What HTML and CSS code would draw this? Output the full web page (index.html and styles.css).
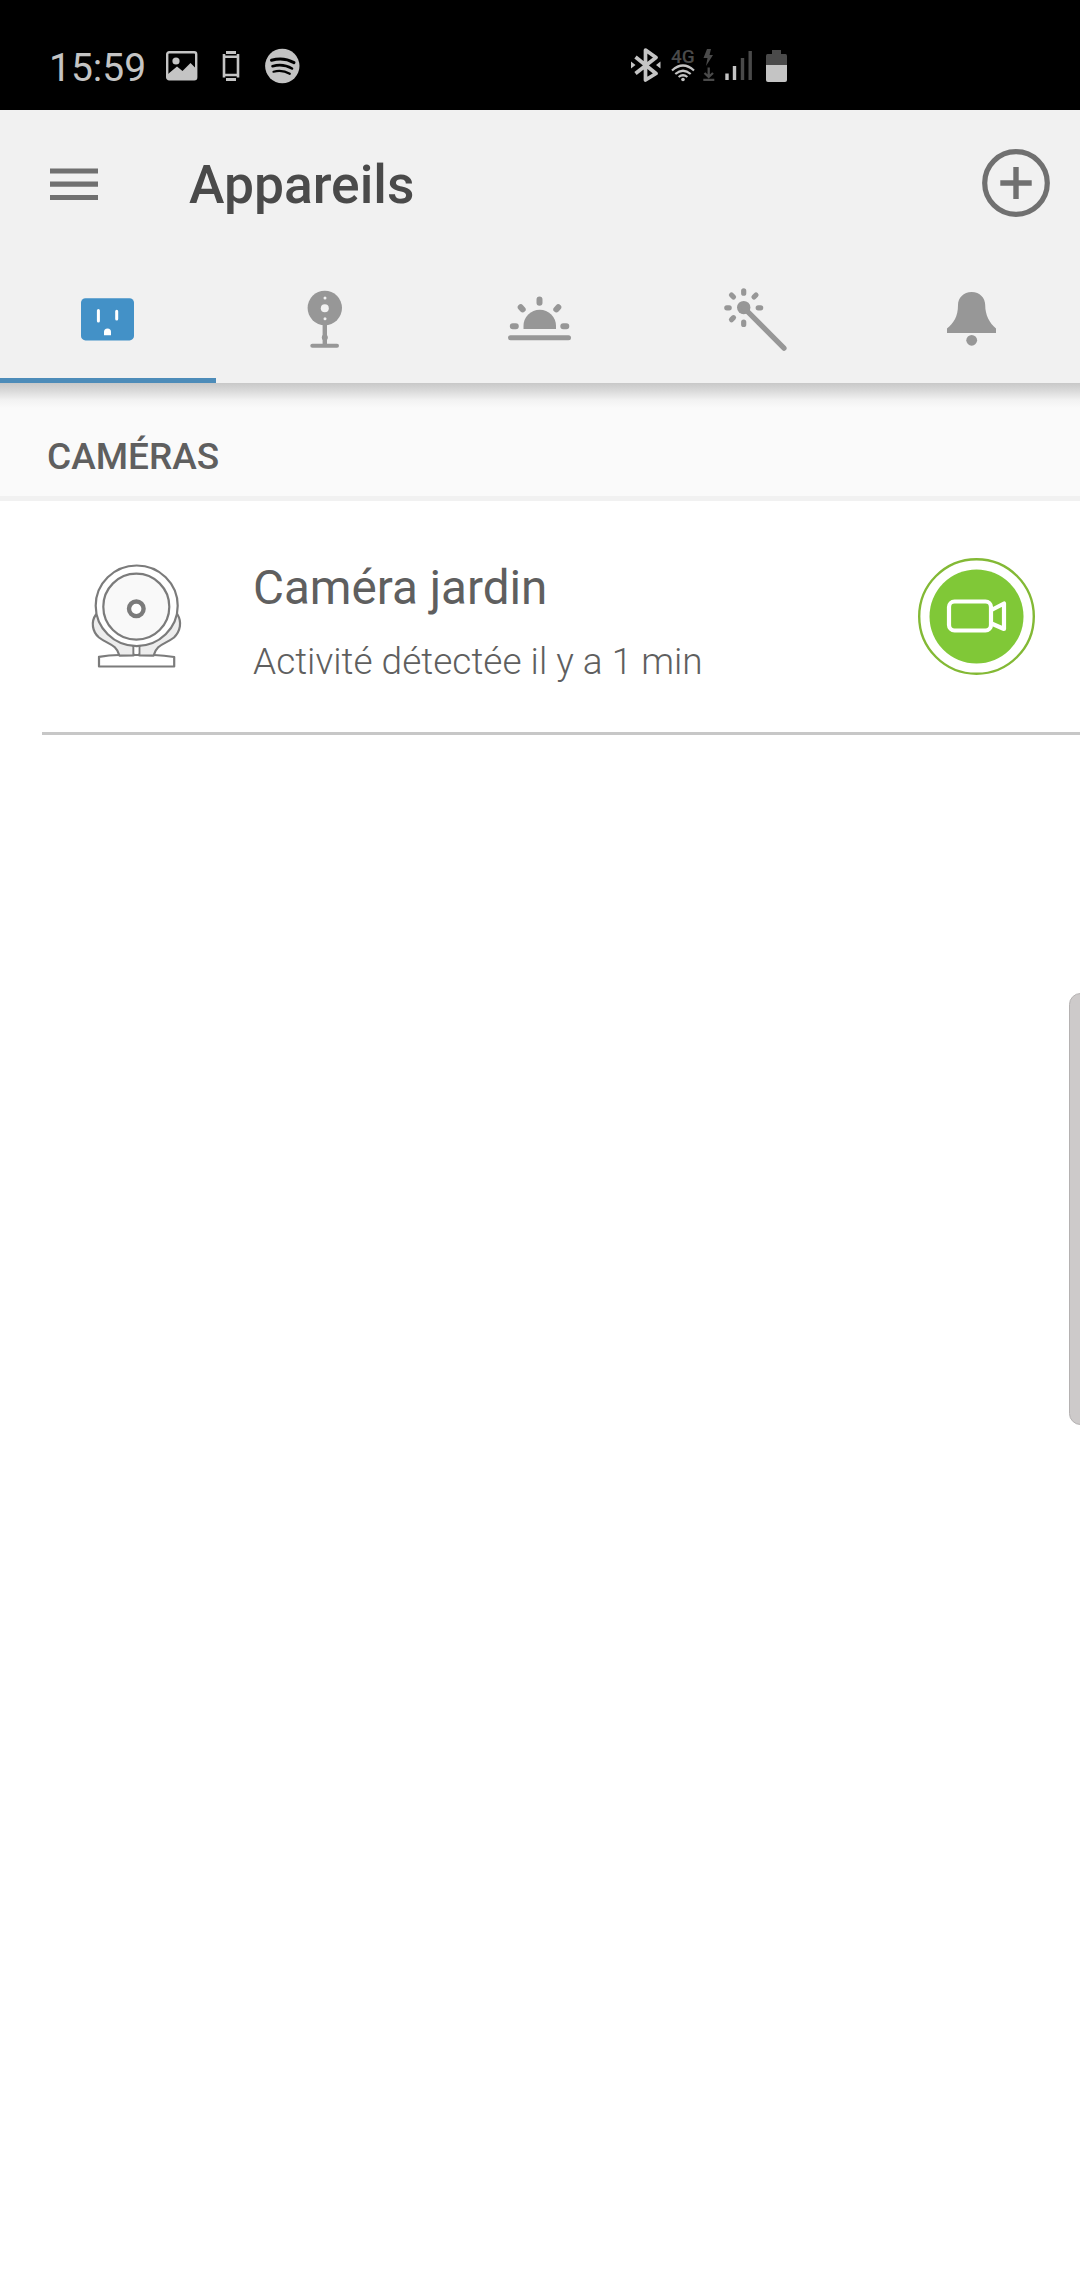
FILE: index.html
```html
<!DOCTYPE html>
<html lang="fr">
<head>
<meta charset="utf-8">
<title>Appareils</title>
<link rel="stylesheet" href="styles.css">
</head>
<body>
<div class="status">
  <div class="status-left">
    <span class="clock">15:59</span>
    <svg class="ic-image" width="32" height="30" viewBox="0 0 32 30"><rect x="1.2" y="1.2" width="29" height="27" rx="2" fill="none" stroke="#c4c4c4" stroke-width="2.4"/><circle cx="10" cy="10" r="3.6" fill="#c4c4c4"/><path d="M2 23L11 15.500L16.500 20L24.500 12L30 17.500V28H2Z" fill="#c4c4c4"/></svg>
    <svg class="ic-phone" width="18" height="30" viewBox="0 0 18 30"><path d="M4 1.500H14M4 28.500H14" stroke="#c4c4c4" stroke-width="3"/><path d="M2 3V26.500M16 3V26.500" stroke="#c4c4c4" stroke-width="2.600"/><path d="M1 5.700H17M1 24H17" stroke="#c4c4c4" stroke-width="2.400"/></svg>
    <svg class="ic-music" width="35" height="36" viewBox="0 0 35 36"><circle cx="17.300" cy="18" r="17.200" fill="#c4c4c4"/><g fill="none" stroke="#000" stroke-linecap="round"><path d="M6.500 12.300C14 10 22.500 11 29 14.600" stroke-width="3"/><path d="M7.500 18.200C14 16.400 21 17 27 20.500" stroke-width="2.600"/><path d="M8.500 23.700C14 22.300 20 23 24.800 25.800" stroke-width="2.200"/></g></svg>
  </div>
  <div class="status-right">
    <svg width="30" height="34" viewBox="631 48 30 34"><path d="M635.500 57L656 73.500L645.500 80V50L656 57.500L635.500 73.500" fill="none" stroke="#c4c4c4" stroke-width="3.700" stroke-linejoin="round"/><path d="M631 61.500L635.500 65L631 68.500ZM660.500 61.500L656 65L660.500 68.500Z" fill="#c4c4c4"/></svg>
    <div class="net">
      <span class="net-label">4G</span>
      <svg width="24" height="18" viewBox="671 64 24 18"><g fill="none" stroke="#c4c4c4" stroke-width="2.200"><path d="M672 70.500Q683 60.500 694 70.500M675.300 74Q683 67.500 690.700 74M678.600 77Q683 73.500 687.400 77"/></g><circle cx="683" cy="79.500" r="1.800" fill="#c4c4c4"/></svg>
    </div>
    <svg class="ic-data" width="12" height="33" viewBox="703 48 12 33"><path d="M707 49H711L709.500 55H713L706 66L707.500 58H703.500Z" fill="#4a4a4a"/><path d="M708.700 67.500V77M704.500 73L708.700 77L713 73M703.300 79.800H714.300" fill="none" stroke="#4a4a4a" stroke-width="2.300"/></svg>
    <svg class="ic-signal" width="28" height="31" viewBox="725 50 28 31"><path d="M727 73.500V80M734.500 66V80" stroke="#c4c4c4" stroke-width="3.400"/><path d="M742.500 58V80M750.200 51V80" stroke="#4a4a4a" stroke-width="3.400"/></svg>
    <svg class="ic-battery" width="21" height="33" viewBox="766 49 21 33"><path d="M772 50H781V54H785.500Q787 54 787 56V65H766V56Q766 54 767.500 54H772Z" fill="#4a4a4a"/><path d="M766 65H787V80Q787 82 785 82H768Q766 82 766 80Z" fill="#c4c4c4"/></svg>
  </div>
</div>

<header class="header">
  <div class="toolbar">
    <svg class="menu" width="48" height="33" viewBox="0 0 48 33"><path d="M0 3H48M0 16.200H48M0 29.500H48" stroke="#707070" stroke-width="5.200"/></svg>
    <h1 class="title">Appareils</h1>
    <svg class="add" width="68" height="68" viewBox="0 0 68 68"><circle cx="34" cy="34" r="31.300" fill="none" stroke="#707070" stroke-width="5.200"/><path d="M34 18V50M18.300 34H49.700" stroke="#707070" stroke-width="5.400"/></svg>
  </div>
  <nav class="tabs">
    <div class="tab active"><svg width="70" height="70" viewBox="73 284 70 70"><rect x="81" y="298.200" width="53" height="42.200" rx="4.500" fill="#4391c7"/><path d="M98.400 310.500V321M116.700 311.300V319" stroke="#fff" stroke-width="3" stroke-linecap="round"/><path d="M104 335.300V332A3.500 3.500 0 0 1 111 332V335.300Z" fill="#fff"/></svg></div>
    <div class="tab"><svg width="70" height="70" viewBox="289 284 70 70"><circle cx="324.800" cy="308" r="17.200" fill="#979797"/><path d="M324.800 320V345" stroke="#979797" stroke-width="4.400"/><circle cx="324.800" cy="337.500" r="3" fill="#979797"/><path d="M312.300 345.700H337" stroke="#979797" stroke-width="4" stroke-linecap="round"/><g fill="#f1f1f1"><circle cx="324.800" cy="308.300" r="4"/><circle cx="325" cy="298" r="1.500"/><circle cx="325" cy="318.800" r="1.500"/></g></svg></div>
    <div class="tab"><svg width="70" height="70" viewBox="505 284 70 70"><path d="M523.500 329V326A16.200 16.200 0 0 1 556 326V329Z" fill="#979797"/><g fill="none" stroke="#979797" stroke-width="6" stroke-linecap="round"><path d="M539.500 299.500V302.700M520.700 307.200L522.700 309.400M558.300 307.200L556.300 309.400M512.800 326.200H515.800M563.300 326.200H566.300"/><path d="M510.500 337.700H568.500" stroke-width="5"/></g></svg></div>
    <div class="tab"><svg width="70" height="70" viewBox="721 284 70 70"><circle cx="743.700" cy="307.600" r="6.700" fill="#979797"/><g fill="none" stroke="#979797" stroke-width="5.200" stroke-linecap="round"><path d="M743.700 307.600L784 348.200"/><path d="M743.700 290.800V293.200M743.700 322V324.500M726.800 307.800H729.200M758.200 307.800H760.700M731.500 295L733.500 297M756 295L754 297M731.500 319.700L733.500 317.700"/></g></svg></div>
    <div class="tab"><svg width="70" height="70" viewBox="937 284 70 70"><path d="M971.700 292C963.500 292 958 298 958 305C958 317 953.500 323 947 328.500V333H996V328.500C989.500 323 985.200 315 985.200 305C985.200 298 979.900 292 971.700 292Z" fill="#979797"/><circle cx="971.700" cy="340.300" r="5.400" fill="#979797"/></svg></div>
  </nav>
</header>

<main>
  <h2 class="section">CAMÉRAS</h2>
  <div class="row">
    <svg class="device" width="94" height="108" viewBox="90 563 94 108"><g stroke="#7b7b7b" stroke-width="2.200" stroke-linejoin="round"><path d="M99 656.800Q109 655.300 119 655H154Q164 655.300 174.200 657V666.500H99Z" fill="#fff"/><path d="M96 614.500C90.500 622 92.500 632 99 637.500C108 644.500 116.500 644 119.500 655.700L133.500 655.500V646.200Z" fill="#ededed"/><path d="M177.500 614.500C182 622 180.500 631 174 637.500C165 644.500 156.500 644 153.500 655.700L139.300 655.500V646.200Z" fill="#ededed"/><path d="M134.500 646V653.500H138.500V646Z" fill="#fff" stroke="none"/><ellipse cx="136.700" cy="605.800" rx="41" ry="40.300" fill="#fff"/><circle cx="136.300" cy="606.700" r="33" fill="#f9f9f9"/><circle cx="136.300" cy="608.800" r="7.300" fill="#fff" stroke-width="4.400"/></g></svg>
    <div class="info">
      <div class="name">Caméra jardin</div>
      <div class="activity">Activité détectée il y a 1 min</div>
    </div>
    <svg class="live" width="118" height="118" viewBox="0 0 118 118"><circle cx="58.500" cy="58.500" r="57.300" fill="#fff" stroke="#83b935" stroke-width="2.400"/><circle cx="58.500" cy="58.500" r="47" fill="#80c837"/><g fill="none" stroke="#fff" stroke-width="4.200" stroke-linejoin="round"><rect x="31" y="43.500" width="42" height="29" rx="5.500"/><path d="M73.500 52L86 45.500V71L73.500 65.500"/></g></svg>
  </div>
</main>
<div class="edge-handle"></div>
</body>
</html>
```
FILE: styles.css
```css
* { box-sizing: border-box; }
body {
  margin: 0;
  width: 1080px;
  height: 2280px;
  position: relative;
  overflow: hidden;
  background: #fff;
  color: #5f5f5f;
  font-family: Roboto, "Noto Sans", sans-serif;
  white-space: nowrap;
}
svg { display: block; flex: none; }
h1, h2 { margin: 0; }

.status {
  height: 110px;
  background: #000;
  display: flex;
  padding-top: 48px;
}
.status-left { display: flex; width: 631px; padding-left: 49px; }
.clock {
  width: 117px;
  color: #c4c4c4;
  font-size: 39px;
  line-height: 40px;
}
.ic-image { margin-top: 3px; }
.ic-phone { margin: 3px 0 0 24px; }
.ic-music { margin-left: 25px; }
.status-right { display: flex; }
.net { width: 24px; margin-left: 10px; }
.net-label {
  display: block;
  height: 16px;
  color: #4a4a4a;
  font-size: 19px;
  font-weight: 500;
  line-height: 17px;
}
.ic-data { margin-left: 8px; }
.ic-signal { margin: 2px 0 0 10px; }
.ic-battery { margin: 1px 0 0 13px; }

.header { height: 273px; background: #f1f1f1; }
.toolbar {
  height: 147px;
  padding: 0 30px 0 50px;
  display: flex;
}
.menu { margin-top: 58px; }
.title {
  margin: 44px 0 0 91px;
  color: #4a4a4a;
  font-size: 53.400px;
  font-weight: 500;
  line-height: 62px;
}
.add { margin: 39px 0 0 auto; }
.tabs { height: 126px; display: grid; grid-template-columns: repeat(5, 1fr); }
.tab {
  display: flex;
  justify-content: center;
  padding-top: 27px;
  border-bottom: 5px solid transparent;
}
.tab.active { border-color: #4d8cb9; }

.section {
  height: 118px;
  padding: 52px 0 0 47px;
  border-bottom: 5px solid #f1f1f1;
  background: linear-gradient(#c8c8c8, #dadada 8px, #f2f2f2 17px, #fafafa 25px);
  font-size: 37px;
  font-weight: 500;
  line-height: 44px;
}
.row {
  height: 234px;
  margin-left: 42px;
  padding-left: 48px;
  border-bottom: 3px solid #c7c7c7;
  display: flex;
}
.device { margin-top: 62px; }
.info { margin-left: 69px; padding-top: 58px; }
.name { font-size: 47.600px; line-height: 58px; }
.activity { margin-top: 23px; font-size: 37px; font-weight: 300; line-height: 44px; }
.live { margin: 57px 44px 0 auto; }

.edge-handle {
  position: absolute;
  top: 993px;
  right: -12px;
  width: 23px;
  height: 432px;
  border: 1px solid #b5b2b2;
  border-radius: 12px;
  background: #cdcaca;
}
```
